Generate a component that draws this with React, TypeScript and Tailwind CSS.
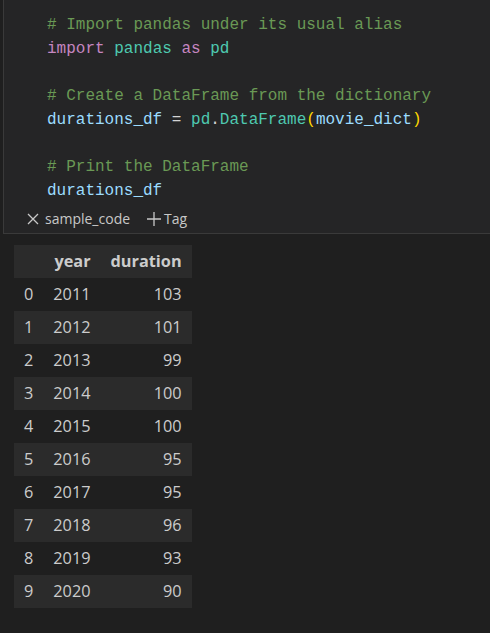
import React from 'react'

const MONO = { fontFamily: '"Liberation Mono", "DejaVu Sans Mono", monospace' }

type Tok = [string, string]

const C = {
  comment: 'text-[#6a9955]',
  kw: 'text-[#c586c0]',
  mod: 'text-[#4ec9b0]',
  vr: 'text-[#9cdcfe]',
  op: 'text-[#d4d4d4]',
  paren: 'text-[#ffd700]',
}

const lines: Tok[][] = [
  [[C.comment, '# Import pandas under its usual alias']],
  [
    [C.kw, 'import'],
    [C.op, ' '],
    [C.mod, 'pandas'],
    [C.op, ' '],
    [C.kw, 'as'],
    [C.op, ' '],
    [C.mod, 'pd'],
  ],
  [],
  [[C.comment, '# Create a DataFrame from the dictionary']],
  [
    [C.vr, 'durations_df'],
    [C.op, ' = '],
    [C.mod, 'pd'],
    [C.op, '.'],
    [C.mod, 'DataFrame'],
    [C.paren, '('],
    [C.vr, 'movie_dict'],
    [C.paren, ')'],
  ],
  [],
  [[C.comment, '# Print the DataFrame']],
  [[C.vr, 'durations_df']],
]

const rows: [number, number, number][] = [
  [0, 2011, 103],
  [1, 2012, 101],
  [2, 2013, 99],
  [3, 2014, 100],
  [4, 2015, 100],
  [5, 2016, 95],
  [6, 2017, 95],
  [7, 2018, 96],
  [8, 2019, 93],
  [9, 2020, 90],
]

export default function App() {
  return (
    <div className="w-[490px] h-[633px] overflow-hidden bg-[#1f1f1f]">
      {/* code cell */}
      <div className="ml-[3px] border-l border-b border-[#3a3a3a] bg-[#252526]">
        <div className="pl-[43px] pt-[14px] text-[16px] leading-[23.7px] whitespace-pre" style={MONO}>
          {lines.map((line, i) => (
            <div key={i} className="h-[23.7px]">
              {line.map(([cls, text], j) => (
                <span key={j} className={cls}>
                  {text}
                </span>
              ))}
            </div>
          ))}
        </div>
        <div
          className="flex items-center h-[22px] mt-[4px] mb-[3px] pl-[23px] text-[14px] text-[#c8c8c8]"
          style={{ fontFamily: '"Open Sans", "Noto Sans", sans-serif' }}
        >
          <svg width="12" height="12" viewBox="0 0 12 12" className="mr-[6px]">
            <path d="M1 1 L11 11 M11 1 L1 11" stroke="#c8c8c8" strokeWidth="1.3" fill="none" />
          </svg>
          <span>sample_code</span>
          <svg width="16" height="16" viewBox="0 0 16 16" className="ml-[16px] mr-[2px]">
            <path d="M8 1 V15 M1 8 H15" stroke="#c8c8c8" strokeWidth="1.3" fill="none" />
          </svg>
          <span>Tag</span>
        </div>
      </div>

      {/* output */}
      <div className="pl-[14px] pt-[11px]">
        <table
          className="border-collapse text-[16.3px] text-[#cccccc]"
          style={{ fontFamily: '"Open Sans", "Noto Sans", sans-serif' }}
        >
          <thead>
            <tr className="bg-[#2b2b2b] h-[33px]">
              <th className="px-[10px]"></th>
              <th className="px-[10px] text-right font-bold">year</th>
              <th className="px-[10px] text-right font-bold">duration</th>
            </tr>
          </thead>
          <tbody>
            {rows.map(([i, y, d]) => (
              <tr key={i} className={`h-[33px] ${i % 2 === 1 ? 'bg-[#2b2b2b]' : ''}`}>
                <td className="px-[10px] text-right">{i}</td>
                <td className="px-[10px] text-right">{y}</td>
                <td className="px-[10px] text-right">{d}</td>
              </tr>
            ))}
          </tbody>
        </table>
      </div>
    </div>
  )
}
